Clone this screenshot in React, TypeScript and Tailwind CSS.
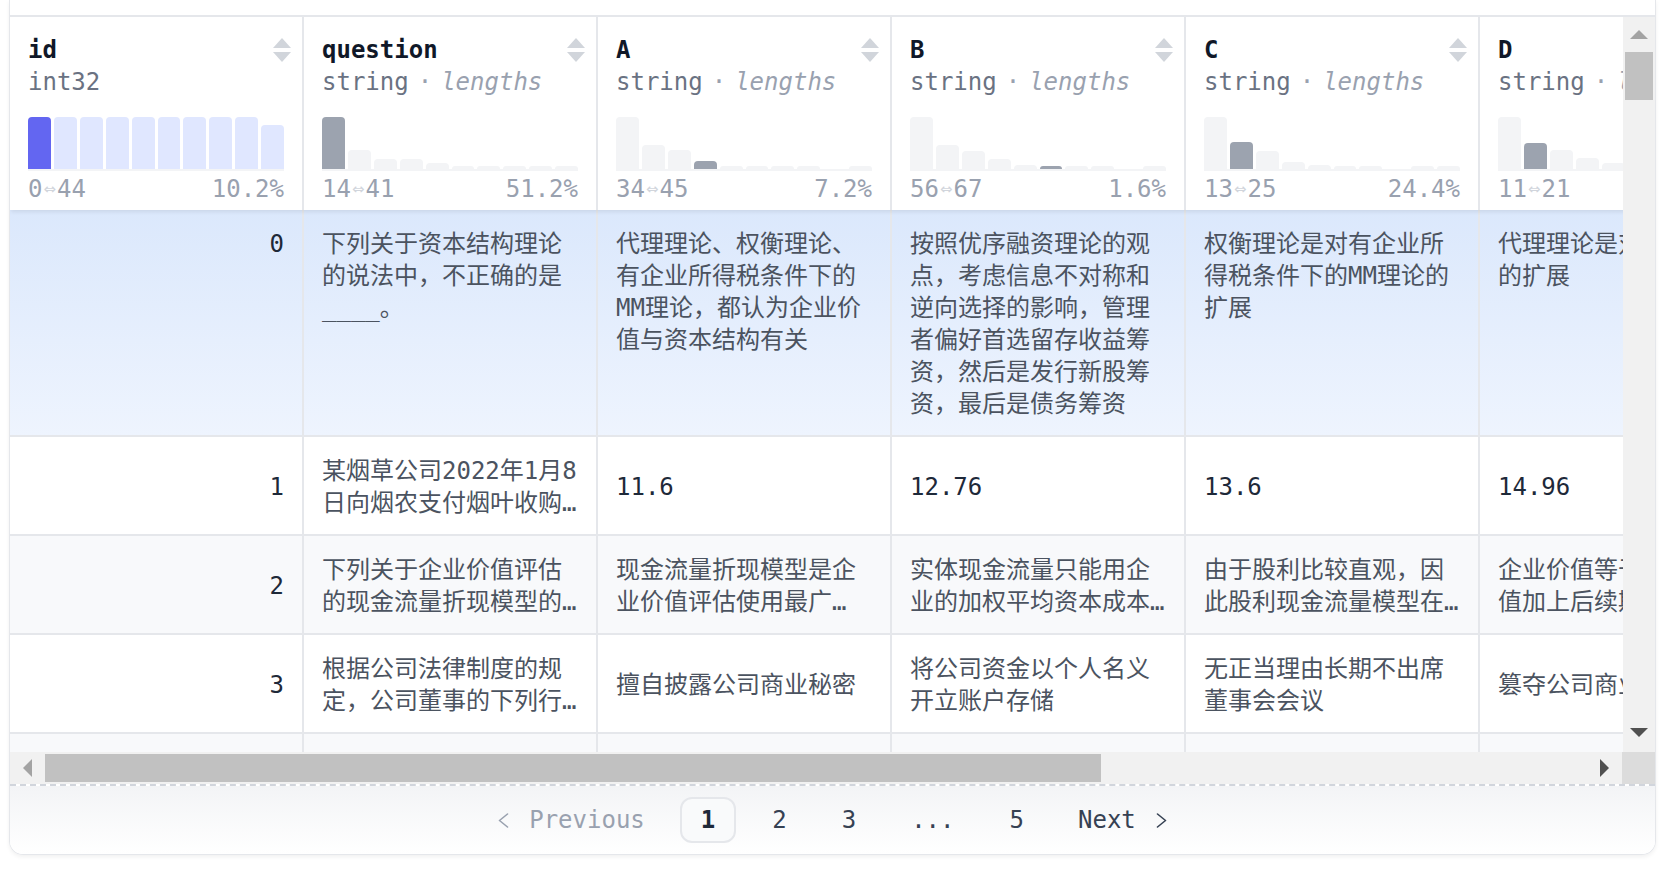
const MONO = "font-['DejaVu_Sans_Mono','Noto_Sans_CJK_SC',monospace]";

type Col = {
  name: string;
  type: string;
  lengths: boolean;
  bars: number[];
  hi: number;
  min: string;
  max: string;
  pct: string;
};

const columns: Col[] = [
  { name: "id", type: "int32", lengths: false, bars: [100, 100, 100, 100, 100, 100, 100, 100, 100, 84], hi: 0, min: "0", max: "44", pct: "10.2%" },
  { name: "question", type: "string", lengths: true, bars: [100, 37, 20, 19, 12, 6, 4, 4, 4, 4], hi: 0, min: "14", max: "41", pct: "51.2%" },
  { name: "A", type: "string", lengths: true, bars: [100, 46, 37, 15, 6, 6, 6, 6, 0, 5], hi: 3, min: "34", max: "45", pct: "7.2%" },
  { name: "B", type: "string", lengths: true, bars: [100, 47, 35, 20, 8, 4, 4, 4, 0, 4], hi: 5, min: "56", max: "67", pct: "1.6%" },
  { name: "C", type: "string", lengths: true, bars: [100, 52, 34, 13, 7, 4, 4, 0, 4, 4], hi: 1, min: "13", max: "25", pct: "24.4%" },
  { name: "D", type: "string", lengths: true, bars: [100, 50, 36, 22, 12, 6, 4, 4, 3, 3], hi: 1, min: "11", max: "21", pct: "23.6%" },
];

const rows = [
  {
    id: 0,
    expanded: true,
    cells: [
      "下列关于资本结构理论的说法中，不正确的是____。",
      "代理理论、权衡理论、有企业所得税条件下的MM理论，都认为企业价值与资本结构有关",
      "按照优序融资理论的观点，考虑信息不对称和逆向选择的影响，管理者偏好首选留存收益筹资，然后是发行新股筹资，最后是债务筹资",
      "权衡理论是对有企业所得税条件下的MM理论的扩展",
      "代理理论是对权衡理论的扩展",
    ],
  },
  {
    id: 1,
    expanded: false,
    cells: [
      "某烟草公司2022年1月8日向烟农支付烟叶收购价款88万元，另向烟农支付了价外补贴，该烟草公司应缴纳的烟叶税为（ ）万元。",
      "11.6",
      "12.76",
      "13.6",
      "14.96",
    ],
  },
  {
    id: 2,
    expanded: false,
    cells: [
      "下列关于企业价值评估的现金流量折现模型的表述中，正确的是____。",
      "现金流量折现模型是企业价值评估使用最广泛、理论上最健全的模型",
      "实体现金流量只能用企业的加权平均资本成本来折现",
      "由于股利比较直观，因此股利现金流量模型在实务中经常被使用",
      "企业价值等于预测期价值加上后续期价值",
    ],
  },
  {
    id: 3,
    expanded: false,
    cells: [
      "根据公司法律制度的规定，公司董事的下列行为中，违反忠实义务的是____。",
      "擅自披露公司商业秘密",
      "将公司资金以个人名义开立账户存储",
      "无正当理由长期不出席董事会会议",
      "篡夺公司商业机会",
    ],
  },
  {
    id: 4,
    expanded: false,
    cells: [
      "下列各项中，属于企业筹资活动产生的现金流量的是____。",
      "吸收投资收到的现金",
      "取得借款收到的现金",
      "偿还债务支付的现金",
      "分配股利支付的现金",
    ],
  },
];

const SortIcon = () => (
  <svg width="18" height="26" viewBox="0 0 18 26" className="-mr-[7px] shrink-0">
    <polygon points="9,1 18,11 0,11" fill="#d1d5db" />
    <polygon points="0,15 18,15 9,25" fill="#d1d5db" />
  </svg>
);

const Chevron = ({ right }: { right?: boolean }) => (
  <svg width="11" height="15" viewBox="0 0 11 15" fill="none" stroke="currentColor" strokeWidth="1.6" strokeLinecap="round" strokeLinejoin="round">
    <polyline points={right ? "1.5,1 9.5,7.5 1.5,14" : "9.5,1 1.5,7.5 9.5,14"} />
  </svg>
);

const HeaderCell = ({ col }: { col: Col }) => {
  const isId = !col.lengths;
  return (
    <div className="w-[294px] shrink-0 border-r-2 border-gray-200 px-[18px] pt-[17px] pb-[7px] bg-white">
      <div className="flex items-center justify-between h-[32px]">
        <span className="font-bold text-gray-900 leading-[32px]">{col.name}</span>
        <SortIcon />
      </div>
      <div className="leading-[32px] whitespace-nowrap">
        <span className="text-gray-500">{col.type}</span>
        {col.lengths && (
          <>
            <span className="text-gray-400 mx-[9px]">·</span>
            <span className="italic text-gray-400">lengths</span>
          </>
        )}
      </div>
      <div className="mt-[19px] flex items-end gap-[3px] h-[52px]">
        {col.bars.map((h, i) => {
          const color = isId
            ? i === col.hi
              ? "bg-[#6366f1]"
              : "bg-[#e0e7ff]"
            : i === col.hi
              ? "bg-[#9ca3af]"
              : "bg-[#f3f4f6]";
          return (
            <div
              key={i}
              className={`flex-1 rounded-t-[4px] ${color}`}
              style={{ height: h === 0 ? 0 : `max(${h}%, 3px)` }}
            />
          );
        })}
      </div>
      <div className="h-[2px] bg-[#f3f4f6]" />
      <div className="mt-[4px] flex justify-between leading-[28px] text-gray-400 whitespace-nowrap">
        <span className="flex items-center">
          {col.min}
          <span className="font-['DejaVu_Sans',sans-serif] text-[15px] text-gray-300 px-[1px]">⇔</span>
          {col.max}
        </span>
        <span>{col.pct}</span>
      </div>
    </div>
  );
};

const isNum = (s: string) => /^[\d.]+$/.test(s);

const BodyRow = ({ row, idx }: { row: (typeof rows)[number]; idx: number }) => {
  const bg = row.expanded
    ? "bg-linear-to-b from-[#dbe8fc] to-[#eef4fe]"
    : idx % 2 === 0
      ? "bg-[#f8f9fb]"
      : "bg-white";
  const align = row.expanded ? "items-start" : "items-center";
  return (
    <div className={`flex w-max border-b-2 border-gray-200 leading-[32px] ${bg}`}>
      <div className={`w-[294px] shrink-0 border-r-2 border-gray-200 px-[18px] pt-[18px] pb-[15px] flex justify-end ${align}`}>
        <span className="text-gray-800">{row.id}</span>
      </div>
      {row.cells.map((c, i) => (
        <div key={i} className={`w-[294px] shrink-0 border-r-2 border-gray-200 px-[18px] pt-[18px] pb-[15px] flex ${align}`}>
          <div className={`${isNum(c) ? "text-gray-800" : "text-[#4b5360]"} ${row.expanded ? "" : "line-clamp-2"}`}>{c}</div>
        </div>
      ))}
    </div>
  );
};

const Tri = ({ dir, dark }: { dir: "up" | "down" | "left" | "right"; dark: boolean }) => {
  const fill = dark ? "#505050" : "#a3a3a3";
  if (dir === "up" || dir === "down") {
    return (
      <svg width="18" height="10" viewBox="0 0 18 10">
        <polygon points={dir === "up" ? "9,0 18,9 0,9" : "0,0 18,0 9,9"} fill={fill} />
      </svg>
    );
  }
  return (
    <svg width="10" height="18" viewBox="0 0 10 18">
      <polygon points={dir === "left" ? "0,9 9,0 9,18" : "0,0 9,9 0,18"} fill={fill} />
    </svg>
  );
};

export default function App() {
  return (
    <div className={`h-[869px] w-full overflow-hidden bg-white ${MONO} text-[24px]`}>
      <div className="ml-[9px] w-[1647px] border-x border-b border-gray-200 rounded-b-[14px] shadow-[0_2px_4px_rgba(0,0,0,0.06)] overflow-hidden">
        <div className="h-[15px]" />
        <div className="flex border-t-2 border-gray-200">
          <div className="flex-1 h-[735px] overflow-hidden">
            <div className="relative z-10 flex w-max shadow-[0_3px_4px_-1px_rgba(0,0,0,0.08)]">
              {columns.map((c) => (
                <HeaderCell key={c.name} col={c} />
              ))}
            </div>
            {rows.map((r, i) => (
              <BodyRow key={r.id} row={r} idx={i} />
            ))}
          </div>
          <div className="w-[32px] shrink-0 bg-[#f1f1f1] flex flex-col items-center">
            <div className="h-[35px] flex items-center justify-center">
              <Tri dir="up" dark={false} />
            </div>
            <div className="w-[28px] h-[48px] bg-[#c1c1c1]" />
            <div className="flex-1" />
            <div className="h-[38px] flex items-center justify-center">
              <Tri dir="down" dark />
            </div>
          </div>
        </div>
        <div className="flex h-[32px] bg-[#f1f1f1]">
          <div className="w-[35px] flex items-center justify-center">
            <Tri dir="left" dark={false} />
          </div>
          <div className="w-[1056px] h-[28px] self-center bg-[#c1c1c1]" />
          <div className="flex-1" />
          <div className="w-[35px] flex items-center justify-center">
            <Tri dir="right" dark />
          </div>
          <div className="w-[33px] bg-[#dcdcdc]" />
        </div>
        <div className="h-[70px] border-t-2 border-dashed border-gray-300 bg-linear-to-b from-gray-100 to-white flex items-center justify-center gap-[17px]">
          <div className="flex items-center gap-[20px] px-[18px] text-gray-400">
            <Chevron />
            <span>Previous</span>
          </div>
          <div className="h-[46px] px-[19px] flex items-center rounded-[12px] border-2 border-gray-200 bg-gray-50 font-bold text-gray-800">
            1
          </div>
          <div className="h-[46px] px-[19px] flex items-center text-gray-700">2</div>
          <div className="h-[46px] px-[19px] flex items-center text-gray-700">3</div>
          <div className="h-[46px] px-[19px] flex items-center text-gray-700">...</div>
          <div className="h-[46px] px-[19px] flex items-center text-gray-700">5</div>
          <div className="flex items-center gap-[20px] px-[18px] text-gray-700">
            <span>Next</span>
            <Chevron right />
          </div>
        </div>
      </div>
    </div>
  );
}
